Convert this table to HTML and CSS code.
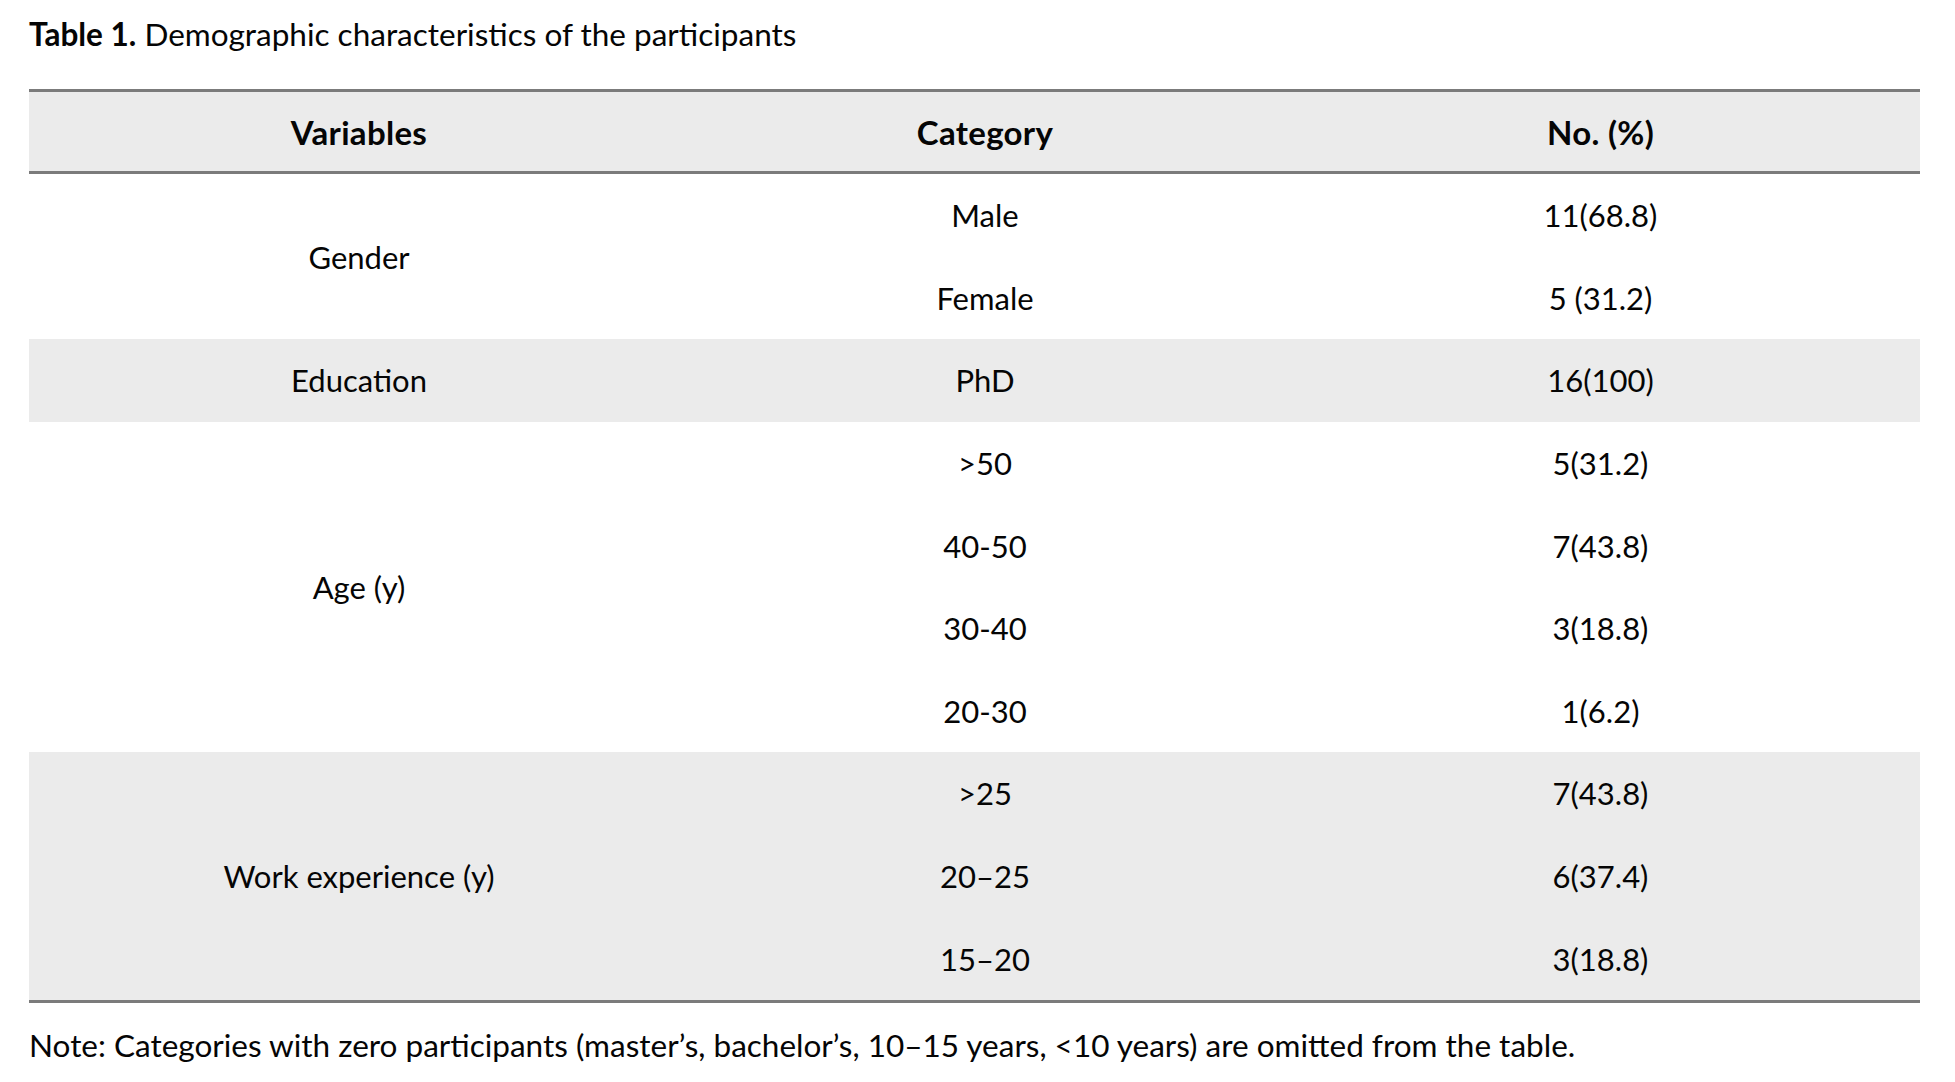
FILE: index.html
```html
<!DOCTYPE html>
<html lang="en">
<head>
<meta charset="utf-8">
<title>Table 1. Demographic characteristics of the participants</title>
<link rel="stylesheet" href="styles.css">
</head>
<body>
<main class="page">
  <p class="caption"><strong>Table 1.</strong> Demographic characteristics of the participants</p>
  <table class="demo">
    <colgroup>
      <col class="c1"><col class="c2"><col class="c3">
    </colgroup>
    <thead>
      <tr><th>Variables</th><th>Category</th><th>No. (%)</th></tr>
    </thead>
    <tbody>
      <tr><td rowspan="2">Gender</td><td>Male</td><td>11(68.8)</td></tr>
      <tr><td>Female</td><td>5 (31.2)</td></tr>
      <tr class="shade"><td>Education</td><td>PhD</td><td>16(100)</td></tr>
      <tr><td rowspan="4">Age (y)</td><td>&gt;50</td><td>5(31.2)</td></tr>
      <tr><td>40-50</td><td>7(43.8)</td></tr>
      <tr><td>30-40</td><td>3(18.8)</td></tr>
      <tr><td>20-30</td><td>1(6.2)</td></tr>
      <tr class="shade"><td rowspan="3">Work experience (y)</td><td>&gt;25</td><td>7(43.8)</td></tr>
      <tr class="shade"><td>20–25</td><td>6(37.4)</td></tr>
      <tr class="shade"><td>15–20</td><td>3(18.8)</td></tr>
    </tbody>
  </table>
  <p class="note">Note: Categories with zero participants (master’s, bachelor’s, 10–15 years, &lt;10 years) are omitted from the table.</p>
</main>
</body>
</html>
```
FILE: styles.css
```css
html, body {
  margin: 0;
  padding: 0;
  background: #ffffff;
}

body {
  font-family: Lato, "Open Sans", "Liberation Sans", sans-serif;
  color: #050505;
}

.page {
  padding: 16px 0 0 29px;
}

.caption {
  margin: 0 0 37px 0;
  font-size: 31.5px;
  line-height: 36px;
}

.caption strong {
  font-weight: 700;
}

.demo {
  width: 1891px;
  table-layout: fixed;
  border-collapse: separate;
  border-spacing: 0;
  border-bottom: 3px solid #7b7b7b;
  font-size: 31px;
}

.c1 { width: 660px; }
.c2 { width: 592px; }
.c3 { width: 639px; }

.demo th,
.demo td {
  box-sizing: border-box;
  padding: 0;
  text-align: center;
  vertical-align: middle;
  line-height: 36px;
}

.demo th {
  height: 85px;
  font-size: 33px;
  letter-spacing: 0.3px;
  font-weight: 700;
  background: #ebebeb;
  border-top: 3px solid #7b7b7b;
  border-bottom: 3px solid #7b7b7b;
}

.demo td {
  height: 82.6px;
  font-weight: 400;
}

.demo tr.shade td {
  background: #ebebeb;
}

.note {
  margin: 24px 0 0 0;
  font-size: 31.5px;
  line-height: 36px;
}
```
